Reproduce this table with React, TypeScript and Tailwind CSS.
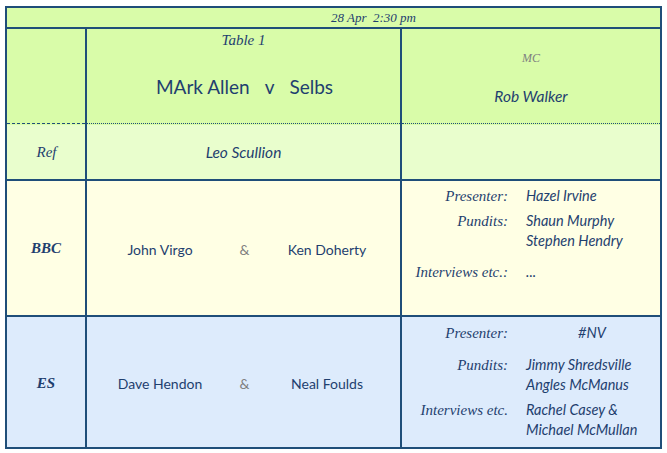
const sans = "font-['Lato','Liberation_Sans',sans-serif]"
const serif = "font-['Liberation_Serif','DejaVu_Serif',serif]"

function Label({ children }: { children?: React.ReactNode }) {
  return (
    <div className={`w-[106px] shrink-0 text-right text-[15px] italic ${serif}`}>{children}</div>
  )
}

function Value({ children, center }: { children: React.ReactNode; center?: boolean }) {
  return (
    <div className={`ml-[18px] flex-1 text-[14.5px] italic ${sans} ${center ? "pr-[2px] text-center" : ""}`}>
      {children}
    </div>
  )
}

function Line({ children, className = "" }: { children: React.ReactNode; className?: string }) {
  return <div className={`flex h-[20px] items-center leading-[20px] ${className}`}>{children}</div>
}

function Pair({ a, b }: { a: string; b: string }) {
  return (
    <div className={`grid w-full grid-cols-[146px_23px_1fr] items-center text-[14px] ${sans}`}>
      <span className="text-center">{a}</span>
      <span className="text-center text-[#7f7f7f]">&amp;</span>
      <span className="pr-[2px] text-center">{b}</span>
    </div>
  )
}

export default function App() {
  return (
    <div className="min-h-[453px] bg-white pl-[5px] pt-[6px]">
      <div className="w-[657px] border-2 border-[#1f4e79] text-[#1f3f6f]">
        {/* date */}
        <div className="flex h-[21px] border-b-2 border-[#1f4e79] bg-[#d9fca9]">
          <div className="w-[80px]" />
          <div className={`flex flex-1 items-center justify-center text-[13px] italic ${serif}`}>
            28 Apr&nbsp;&nbsp;2:30 pm
          </div>
        </div>

        {/* match */}
        <div className="flex h-[96px] bg-[#d9fca9]">
          <div className="w-[80px] border-r-2 border-[#1f4e79]">
            <div className="h-[95px] border-b border-dashed border-b-[#1f4e79]" />
          </div>
          <div className="flex w-[315px] flex-col items-center border-r-2 border-r-[#1f4e79]">
            <div className="h-[95px] w-full border-b border-dotted border-b-[#1f4e79]">
              <div className={`pt-[3px] text-center text-[15px] leading-[16px] italic ${serif}`}>Table 1</div>
              <div className={`mt-[27px] flex justify-center pl-[2px] text-[19px] leading-[24px] ${sans}`}>
                <span>MArk Allen</span>
                <span className="mx-[15px]">v</span>
                <span>Selbs</span>
              </div>
            </div>
          </div>
          <div className="flex-1">
            <div className="h-[95px] border-b border-dotted border-b-[#1f4e79] text-center">
              <div className={`pt-[21px] text-[12px] leading-[16px] italic text-[#808080] ${serif}`}>MC</div>
              <div className={`mt-[20px] text-[15.5px] leading-[20px] italic ${sans}`}>Rob Walker</div>
            </div>
          </div>
        </div>

        {/* ref */}
        <div className="flex h-[56px] border-b-2 border-[#1f4e79] bg-[#e9fecd]">
          <div className={`flex w-[80px] items-center justify-center border-r-2 border-[#1f4e79] pl-[1px] text-[15px] italic ${serif}`}>
            Ref
          </div>
          <div className={`flex w-[315px] items-center justify-center border-r-2 border-[#1f4e79] pt-[2px] text-[15.5px] italic ${sans}`}>
            Leo Scullion
          </div>
          <div className="flex-1" />
        </div>

        {/* BBC */}
        <div className="flex h-[136px] border-b-2 border-[#1f4e79] bg-[#ffffe4]">
          <div className={`flex w-[80px] items-center justify-center border-r-2 border-[#1f4e79] text-[15px] font-bold italic ${serif}`}>
            BBC
          </div>
          <div className="flex w-[315px] items-center border-r-2 border-[#1f4e79] pt-[2px]">
            <Pair a="John Virgo" b="Ken Doherty" />
          </div>
          <div className="flex-1 pt-[5px]">
            <Line>
              <Label>Presenter:</Label>
              <Value>Hazel Irvine</Value>
            </Line>
            <Line className="mt-[5px]">
              <Label>Pundits:</Label>
              <Value>Shaun Murphy</Value>
            </Line>
            <Line>
              <Label />
              <Value>Stephen Hendry</Value>
            </Line>
            <Line className="mt-[11px]">
              <Label>Interviews etc.:</Label>
              <Value>...</Value>
            </Line>
          </div>
        </div>

        {/* ES */}
        <div className="flex h-[130px] bg-[#ddebfc]">
          <div className={`flex w-[80px] items-center justify-center border-r-2 border-[#1f4e79] pt-[2px] text-[15px] font-bold italic ${serif}`}>
            ES
          </div>
          <div className="flex w-[315px] items-center border-r-2 border-[#1f4e79] pt-[2px]">
            <Pair a="Dave Hendon" b="Neal Foulds" />
          </div>
          <div className="flex-1 pt-[6px]">
            <Line>
              <Label>Presenter:</Label>
              <Value center>#NV</Value>
            </Line>
            <Line className="mt-[12px]">
              <Label>Pundits:</Label>
              <Value>Jimmy Shredsville</Value>
            </Line>
            <Line>
              <Label />
              <Value>Angles McManus</Value>
            </Line>
            <Line className="mt-[5px]">
              <Label>Interviews etc.</Label>
              <Value>Rachel Casey &amp;</Value>
            </Line>
            <Line>
              <Label />
              <Value>Michael McMullan</Value>
            </Line>
          </div>
        </div>
      </div>
    </div>
  )
}
